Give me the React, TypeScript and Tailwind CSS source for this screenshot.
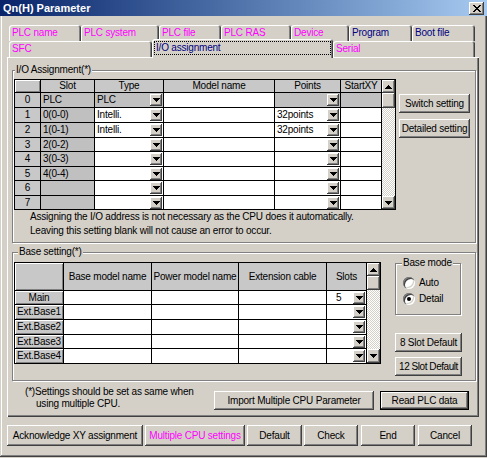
import type { ReactNode } from "react"

const RAISED =
  "bg-[#d4d0c8] shadow-[inset_-1px_-1px_0_#404040,inset_1px_1px_0_#fff,inset_-2px_-2px_0_#808080]"

function Arrow({ up = false }: { up?: boolean }) {
  return (
    <svg width="7" height="4" viewBox="0 0 7 4" shapeRendering="crispEdges" className={up ? "rotate-180" : ""}>
      <rect x="0" y="0" width="7" height="1" fill="#000" />
      <rect x="1" y="1" width="5" height="1" fill="#000" />
      <rect x="2" y="2" width="3" height="1" fill="#000" />
      <rect x="3" y="3" width="1" height="1" fill="#000" />
    </svg>
  )
}

function Drop() {
  return (
    <span className={`ml-auto mr-px flex h-[12px] w-[12px] shrink-0 items-center justify-center ${RAISED}`}>
      <Arrow />
    </span>
  )
}

function Btn({ children, className = "", deflt = false }: { children: ReactNode; className?: string; deflt?: boolean }) {
  return (
    <button
      className={`flex shrink-0 items-center justify-center whitespace-nowrap bg-[#d4d0c8] ${
        deflt
          ? "shadow-[inset_0_0_0_1px_#000,inset_-2px_-2px_0_#404040,inset_2px_2px_0_#fff,inset_-3px_-3px_0_#808080]"
          : "shadow-[inset_-1px_-1px_0_#404040,inset_1px_1px_0_#fff,inset_-2px_-2px_0_#808080]"
      } ${className}`}
    >
      {children}
    </button>
  )
}

function Cell({
  children,
  gray = false,
  drop = false,
  className = "",
}: {
  children?: ReactNode
  gray?: boolean
  drop?: boolean
  className?: string
}) {
  return (
    <div
      className={`flex items-center overflow-hidden whitespace-nowrap pl-[2px] ${gray ? "bg-[#c0c0c0]" : "bg-white"} ${className}`}
    >
      {children && <span>{children}</span>}
      {drop && <Drop />}
    </div>
  )
}

function Head({ children, raised = false }: { children?: ReactNode; raised?: boolean }) {
  return (
    <div
      className={`flex items-center justify-center whitespace-nowrap bg-[#c8c8c8] ${
        raised ? "shadow-[inset_1px_1px_0_#fff,inset_-1px_-1px_0_#808080]" : ""
      }`}
    >
      {children}
    </div>
  )
}

function VScroll({ up, thumb, down }: { up: string; thumb: string; down: string }) {
  return (
    <div className="flex w-[14px] flex-col border-l border-black">
      <div className={`flex items-center justify-center ${RAISED} ${up}`}>
        <Arrow up />
      </div>
      <div className={`${RAISED} ${thumb}`} />
      <div className="flex-1 bg-[repeating-conic-gradient(#d4d0c8_0_25%,#fff_0_50%)] bg-[length:2px_2px]" />
      <div className={`flex items-center justify-center ${RAISED} ${down}`}>
        <Arrow />
      </div>
    </div>
  )
}

function Group({
  label,
  labelLeft,
  className,
  children,
}: {
  label: string
  labelLeft: string
  className: string
  children: ReactNode
}) {
  return (
    <div className={`relative border border-[#808080] shadow-[inset_1px_1px_0_#fff,1px_1px_0_#fff] ${className}`}>
      <span className={`absolute -top-[7px] bg-[#d4d0c8] px-[1px] leading-[12px] ${labelLeft}`}>{label}</span>
      {children}
    </div>
  )
}

function Radio({ checked = false }: { checked?: boolean }) {
  return (
    <span className="flex h-[12px] w-[12px] items-center justify-center rounded-full bg-white shadow-[inset_1px_1px_0_#808080,inset_2px_2px_0_#404040,inset_-1px_-1px_0_#fff,inset_-2px_-2px_0_#d4d0c8]">
      {checked && <span className="h-[4px] w-[4px] rounded-full bg-black" />}
    </span>
  )
}

const ioRows = [
  { n: "0", slot: "PLC", type: "PLC", points: "", first: true },
  { n: "1", slot: "0(0-0)", type: "Intelli.", points: "32points" },
  { n: "2", slot: "1(0-1)", type: "Intelli.", points: "32points" },
  { n: "3", slot: "2(0-2)", type: "", points: "" },
  { n: "4", slot: "3(0-3)", type: "", points: "" },
  { n: "5", slot: "4(0-4)", type: "", points: "" },
  { n: "6", slot: "", type: "", points: "" },
  { n: "7", slot: "", type: "", points: "" },
]

function IOTable() {
  return (
    <div className="flex border border-black">
      <div className="grid grid-cols-[25px_53px_68px_110px_65px_40px] grid-rows-[12px_14px_14px_14px_13px_14px_13px_14px_13px] gap-px bg-black">
        <Head raised />
        <Head>Slot</Head>
        <Head>Type</Head>
        <Head>Model name</Head>
        <Head>Points</Head>
        <Head>StartXY</Head>
        {ioRows.map((r) => (
          <div key={r.n} className="contents">
            <Head>{r.n}</Head>
            <Cell gray>{r.slot}</Cell>
            <Cell gray={r.first} drop>
              {r.type}
            </Cell>
            <Cell />
            <Cell gray={r.first} drop>
              {r.points}
            </Cell>
            <Cell gray={r.first} />
          </div>
        ))}
      </div>
      <VScroll up="h-[13px]" thumb="h-[15px]" down="h-[13px]" />
    </div>
  )
}

const baseRows = [
  { n: "Main", slots: "5" },
  { n: "Ext.Base1", slots: "" },
  { n: "Ext.Base2", slots: "" },
  { n: "Ext.Base3", slots: "" },
  { n: "Ext.Base4", slots: "" },
]

function BaseTable() {
  return (
    <div className="flex border border-black">
      <div className="grid grid-cols-[48px_87px_86px_87px_39px] grid-rows-[27px_13px_14px_14px_13px_14px] gap-px bg-black">
        <Head raised />
        <Head>Base model name</Head>
        <Head>Power model name</Head>
        <Head>Extension cable</Head>
        <Head>Slots</Head>
        {baseRows.map((r) => (
          <div key={r.n} className="contents">
            <Head raised>{r.n}</Head>
            <Cell />
            <Cell />
            <Cell />
            <Cell drop className="pl-[9px]">
              {r.slots}
            </Cell>
          </div>
        ))}
      </div>
      <VScroll up="h-[13px]" thumb="h-[14px]" down="h-[14px]" />
    </div>
  )
}

const TAB =
  "flex h-full items-center rounded-t-[3px] pl-[3px] shadow-[inset_1px_1px_0_#fff,inset_-1px_0_0_#404040,inset_-2px_0_0_#808080]"

export default function App() {
  return (
    <div className="h-[458px] w-[487px] overflow-hidden bg-[#d4d0c8] font-['Liberation_Sans',Arial,sans-serif] text-[10px] leading-[12px] tracking-[-0.2px] text-black">
      <div className="h-[457px] shadow-[inset_-1px_-1px_0_#404040,inset_1px_1px_0_#d4d0c8,inset_-2px_-2px_0_#808080,inset_2px_2px_0_#fff]">
        {/* title bar */}
        <div className="flex h-[16px] items-center bg-linear-to-r from-[#0a246a] to-[#a6caf0] px-[3px]">
          <span className="text-[11px] font-bold tracking-normal text-white">Qn(H) Parameter</span>
          <button className={`ml-auto flex h-[13px] w-[15px] items-center justify-center ${RAISED}`}>
            <svg width="8" height="7" viewBox="0 0 8 7" shapeRendering="crispEdges">
              <path d="M0 0h2v1H0zM6 0h2v1H6zM1 1h2v1H1zM5 1h2v1H5zM2 2h4v1H2zM3 3h2v1H3zM2 4h4v1H2zM1 5h2v1H1zM5 5h2v1H5zM0 6h2v1H0zM6 6h2v1H6z" fill="#000" />
            </svg>
          </button>
        </div>

        {/* tabs */}
        <div className="ml-[9px] mt-[9px] flex h-[16px]">
          <div className={`${TAB} w-[72px] text-[#ff00ff]`}>PLC name</div>
          <div className={`${TAB} w-[78px] text-[#ff00ff]`}>PLC system</div>
          <div className={`${TAB} w-[62px] text-[#ff00ff]`}>PLC file</div>
          <div className={`${TAB} w-[70px] text-[#ff00ff]`}>PLC RAS</div>
          <div className={`${TAB} w-[58px] text-[#ff00ff]`}>Device</div>
          <div className={`${TAB} w-[63px] text-[#000080]`}>Program</div>
          <div className={`${TAB} w-[63px] text-[#000080]`}>Boot file</div>
        </div>
        <div className="ml-[9px] flex h-[16px]">
          <div className={`${TAB} w-[143px] text-[#ff00ff]`}>SFC</div>
          <div className="relative z-10 -mt-[2px] flex h-[19px] w-[181px] shrink-0 rounded-t-[3px] bg-[#d4d0c8] p-[2px] pb-[3px] shadow-[inset_1px_1px_0_#fff,inset_-1px_0_0_#404040,inset_-2px_0_0_#808080]">
            <div className="flex flex-1 items-center border border-dotted border-black pl-[1px] text-[#000080]">
              I/O assignment
            </div>
          </div>
          <div className={`${TAB} w-[142px] text-[#ff00ff]`}>Serial</div>
        </div>

        {/* tab page */}
        <div className="ml-[7px] flex h-[360px] w-[472px] flex-col bg-[#d4d0c8] shadow-[inset_1px_1px_0_#fff,inset_-1px_-1px_0_#404040,inset_-2px_-2px_0_#808080]">
          <Group label="I/O Assignment(*)" labelLeft="left-[2px]" className="ml-[5px] mt-[13px] h-[173px] w-[464px] pl-[1px] pt-[8px]">
            <div className="flex items-start">
              <IOTable />
              <div className="ml-[3px] mt-[15px] flex flex-col gap-[6px]">
                <Btn className="h-[19px] w-[71px]">Switch setting</Btn>
                <Btn className="h-[19px] w-[71px]">Detailed setting</Btn>
              </div>
            </div>
            <div className="ml-[16px] leading-[14px]">
              <div>Assigning the I/O address is not necessary as the CPU does it automatically.</div>
              <div>Leaving this setting blank will not cause an error to occur.</div>
            </div>
          </Group>

          <Group label="Base setting(*)" labelLeft="left-[5px]" className="ml-[5px] mt-[9px] h-[129px] w-[464px] pl-[1px] pt-[9px]">
            <div className="flex items-start">
              <BaseTable />
              <div className="ml-[14px] mt-[1px] flex flex-col">
                <Group label="Base mode" labelLeft="left-[6px]" className="h-[52px] w-[66px] pl-[7px] pt-[12px]">
                  <div className="flex h-[14px] items-center gap-[4px]">
                    <Radio />
                    <span>Auto</span>
                  </div>
                  <div className="mt-[2px] flex h-[14px] items-center gap-[4px]">
                    <Radio checked />
                    <span>Detail</span>
                  </div>
                </Group>
                <Btn className="mt-[18px] h-[19px] w-[67px]">8 Slot Default</Btn>
                <Btn className="mt-[5px] h-[19px] w-[67px] tracking-[-0.45px]">12 Slot Default</Btn>
              </div>
            </div>
          </Group>

          <div className="ml-[18px] mt-[10px] flex">
            <div className="-mt-[5px] w-[189px] leading-[12px]">
              <div>(*)Settings should be set as same when</div>
              <div className="pl-[11px]">using multiple CPU.</div>
            </div>
            <Btn className="h-[19px] w-[160px]">Import Multiple CPU Parameter</Btn>
            <Btn deflt className="ml-[6px] h-[19px] w-[89px]">
              Read PLC data
            </Btn>
          </div>
        </div>

        {/* dialog buttons */}
        <div className="ml-[7px] mt-[8px] flex">
          <Btn className="h-[21px] w-[136px]">Acknowledge XY assignment</Btn>
          <Btn className="ml-[2px] h-[21px] w-[100px] text-[#ff00ff]">Multiple CPU settings</Btn>
          <Btn className="ml-[2px] h-[21px] w-[55px]">Default</Btn>
          <Btn className="ml-[2px] h-[21px] w-[54px]">Check</Btn>
          <Btn className="ml-[3px] h-[21px] w-[54px]">End</Btn>
          <Btn className="ml-[3px] h-[21px] w-[54px]">Cancel</Btn>
        </div>
      </div>
    </div>
  )
}
